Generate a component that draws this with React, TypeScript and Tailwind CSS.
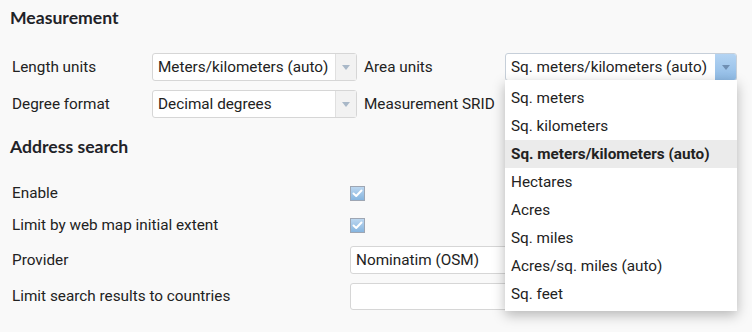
import React from "react";

const Caret = ({ color }: { color: string }) => (
  <svg width="8" height="5" viewBox="0 0 8 5">
    <path d="M0 0 L8 0 L4 5 Z" fill={color} />
  </svg>
);

const Select = ({ value, active = false, className = "" }: { value: string; active?: boolean; className?: string }) => (
  <div
    className={
      "flex h-[28px] items-stretch rounded-[3px] border bg-white " +
      (active ? "border-[#c6cfd9] " : "border-[#d6d6d6] ") +
      className
    }
  >
    <div className="flex flex-1 items-center overflow-hidden whitespace-nowrap pl-[5px] text-[15.3px] text-[#222]">{value}</div>
    {active ? (
      <div className="flex w-[21px] items-center justify-center rounded-r-[2px] bg-gradient-to-b from-[#b4d4f3] to-[#8fbbe6]">
        <Caret color="#6f8fb3" />
      </div>
    ) : (
      <div className="flex w-[21px] items-center justify-center border-l border-[#e0e0e0] bg-[#f2f2f2]">
        <Caret color="#a9b8c8" />
      </div>
    )}
  </div>
);

const Checkbox = () => (
  <div className="flex h-[15px] w-[15px] items-center justify-center border border-[#9ea6b3] bg-gradient-to-b from-[#bcd7f0] to-[#86b5df]">
    <svg width="11" height="9" viewBox="0 0 11 9">
      <path d="M1.5 4.5 L4.2 7 L9.5 1.5" stroke="white" strokeWidth="2" fill="none" strokeLinecap="round" strokeLinejoin="round" />
    </svg>
  </div>
);

const items = [
  "Sq. meters",
  "Sq. kilometers",
  "Sq. meters/kilometers (auto)",
  "Hectares",
  "Acres",
  "Sq. miles",
  "Acres/sq. miles (auto)",
  "Sq. feet",
];

export default function App() {
  return (
    <div className="h-[332px] w-[752px] overflow-hidden bg-[#f9f9f9] text-[15.3px] text-[#222]" style={{ fontFamily: "Roboto, 'Noto Sans', sans-serif" }}>
      <div className="flex flex-col px-[10px]">
        <div className="mt-[6px] h-[24px] text-[17.6px] font-bold leading-[24px] text-[#1f2328]" style={{ fontFamily: "Lato, sans-serif" }}>
          Measurement
        </div>
        <div className="mt-[23px] flex h-[28px] items-center">
          <div className="w-[142px] pl-[2px]">Length units</div>
          <Select value="Meters/kilometers (auto)" className="w-[205px]" />
          <div className="w-[148px] pl-[7px]">Area units</div>
          <div className="relative w-[232px]">
            <Select value="Sq. meters/kilometers (auto)" active className="w-[232px]" />
            <div className="absolute left-0 top-[27px] z-10 w-[232px] bg-white pb-[3px] pt-[4px] shadow-[0_4px_12px_rgba(0,0,0,0.28)]">
              {items.map((it) => (
                <div
                  key={it}
                  className={
                    "flex h-[28px] items-center whitespace-nowrap pl-[6px] pt-[1px] text-[15.3px] " +
                    (it === "Sq. meters/kilometers (auto)" ? "bg-[#ebebeb] font-bold text-[#222]" : "text-[#222]")
                  }
                >
                  {it}
                </div>
              ))}
            </div>
          </div>
        </div>
        <div className="mt-[9px] flex h-[28px] items-center">
          <div className="w-[142px] pl-[2px]">Degree format</div>
          <Select value="Decimal degrees" className="w-[205px]" />
          <div className="w-[148px] pl-[7px]">Measurement SRID</div>
          <div className="w-[232px]" />
        </div>
        <div className="mt-[17px] h-[24px] text-[17.6px] font-bold leading-[24px] text-[#1f2328]" style={{ fontFamily: "Lato, sans-serif" }}>
          Address search
        </div>
        <div className="mt-[18px] flex h-[32px] items-center">
          <div className="w-[340px] pl-[2px]">Enable</div>
          <Checkbox />
        </div>
        <div className="flex h-[32px] items-center">
          <div className="w-[340px] pl-[2px]">Limit by web map initial extent</div>
          <Checkbox />
        </div>
        <div className="mt-[5px] flex h-[28px] items-center">
          <div className="w-[340px] pl-[2px]">Provider</div>
          <Select value="Nominatim (OSM)" className="w-[387px]" />
        </div>
        <div className="mt-[9px] flex h-[27px] items-center">
          <div className="w-[340px] pl-[2px]">Limit search results to countries</div>
          <div className="h-[27px] w-[387px] rounded-[3px] border border-[#d6d6d6] bg-white" />
        </div>
      </div>
    </div>
  );
}
